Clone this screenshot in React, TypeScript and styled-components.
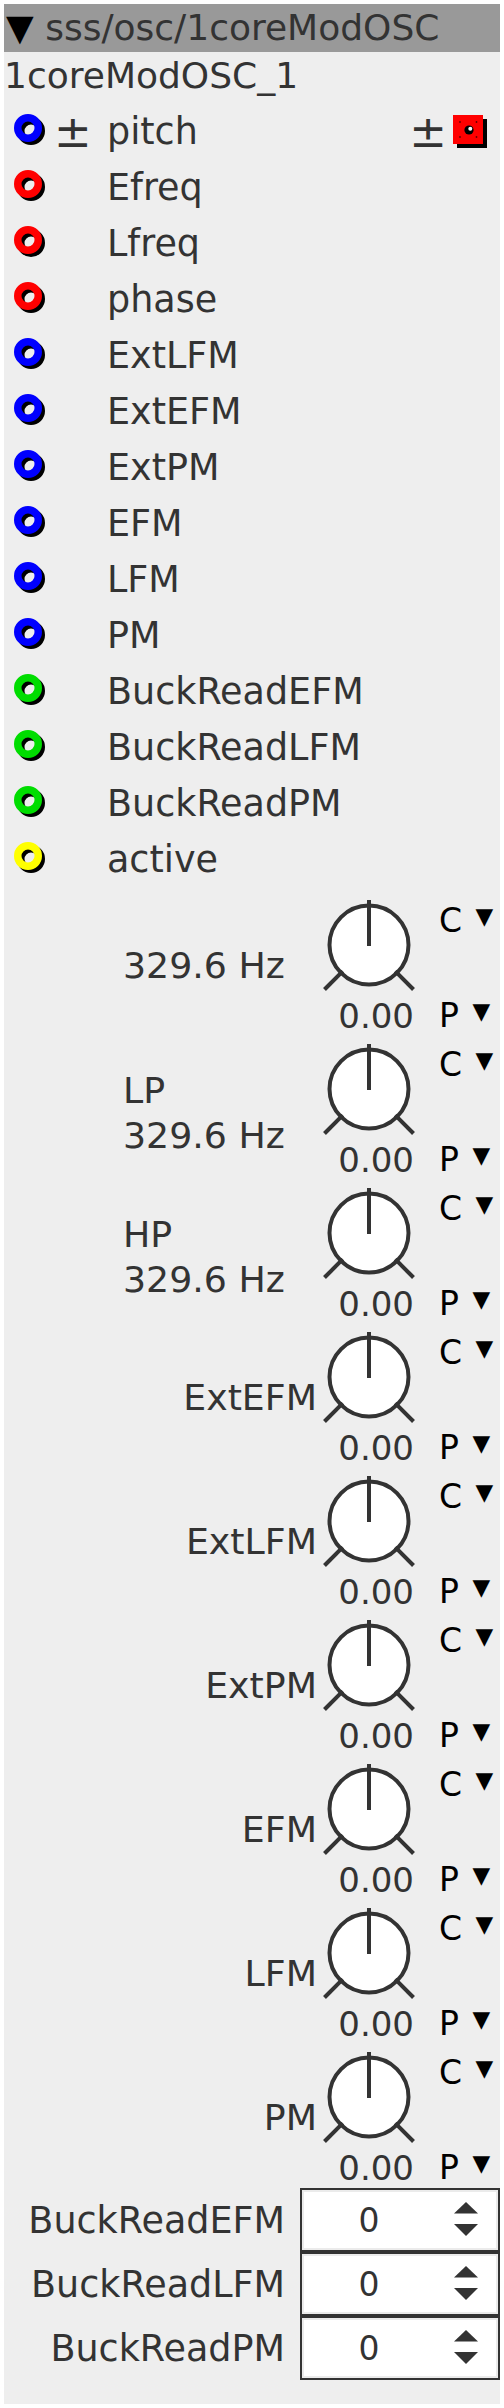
import styled, { createGlobalStyle } from 'styled-components';

const GlobalStyle = createGlobalStyle`
  html, body {
    margin: 0;
    padding: 0;
    background: #fff;
  }
  body {
    font-family: "DejaVu Sans", "Liberation Sans", sans-serif;
    color: #333;
  }
`;

const Panel = styled.div`
  margin: 4px;
  width: 496px;
  height: 2400px;
  background: #eeeeee;
  display: flex;
  flex-direction: column;
`;

const Header = styled.div`
  height: 48px;
  background: #999999;
  display: flex;
  align-items: center;
  padding: 0 0 2px 2px;
  box-sizing: border-box;
  font-size: 36px;
  white-space: nowrap;
  .caret {
    color: #000;
  }
`;

const Title = styled.div`
  height: 52px;
  padding-top: 3px;
  box-sizing: border-box;
  font-size: 36px;
  white-space: nowrap;
`;

const PortList = styled.div`
  display: flex;
  flex-direction: column;
`;

const PortRow = styled.div`
  display: grid;
  grid-template-columns: 50px 53px 1fr auto;
  align-items: center;
  height: 56px;
  padding-right: 12px;
  font-size: 36.5px;
  line-height: 56px;
  white-space: nowrap;
  svg {
    display: block;
  }
`;

const PlusMinus = styled.span`
  font-size: 45px;
  line-height: 56px;
`;

const RingCell = styled.div`
  padding-left: 10px;
  margin-top: -2px;
`;

const RightGroup = styled.div`
  display: flex;
  align-items: center;
  gap: 6px;
`;

const KnobSection = styled.div`
  margin-top: 5px;
  display: flex;
  flex-direction: column;
`;

const KnobRow = styled.div`
  display: grid;
  grid-template-columns: 314px 100px 1fr;
  height: 144px;
`;

const KnobLabel = styled.div<{ $left?: boolean; $twoLine?: boolean }>`
  align-self: center;
  font-size: 36.3px;
  line-height: 45px;
  white-space: nowrap;
  text-align: ${(p) => (p.$left ? 'left' : 'right')};
  padding: ${(p) => (p.$left ? '0 0 0 119px' : '0 1px 0 0')};
  margin-top: ${(p) => (p.$twoLine ? '8px' : '0')};
`;

const KnobCol = styled.div`
  display: flex;
  flex-direction: column;
  svg {
    display: block;
    margin: 5px 0 0 4px;
  }
`;

const Value = styled.div`
  margin-top: 4px;
  font-size: 34px;
  text-align: right;
  padding-right: 4px;
  white-space: nowrap;
`;

const ModCol = styled.div`
  display: flex;
  flex-direction: column;
  justify-content: space-between;
  padding: 8px 0 2px 21px;
  font-size: 33px;
  color: #000;
  white-space: nowrap;
`;

const Drop = styled.span`
  font-size: 23px;
  vertical-align: 8px;
  margin-left: 3px;
`;

const SpinSection = styled.div`
  margin-top: -1px;
  display: flex;
  flex-direction: column;
`;

const SpinRow = styled.div`
  display: grid;
  grid-template-columns: 281px 200px;
  column-gap: 15px;
  align-items: center;
  height: 64px;
`;

const SpinLabel = styled.div`
  text-align: right;
  font-size: 36.5px;
  white-space: nowrap;
`;

const SpinBox = styled.div`
  height: 64px;
  box-sizing: border-box;
  border: 2.5px solid #333;
  background: #fff;
  box-shadow: inset 0 0 0 2px #ebebeb;
  display: grid;
  grid-template-columns: 1fr 64px;
  align-items: center;
  svg {
    display: block;
    margin: 0 auto;
  }
`;

const SpinValue = styled.div`
  text-align: center;
  font-size: 33px;
  padding-left: 2px;
`;

const Port = ({ color }: { color: string }) => (
  <svg width="34" height="34" viewBox="0 0 34 34">
    <circle cx="17" cy="17" r="10.25" fill="none" stroke="#000" strokeWidth="7.5" />
    <circle cx="14" cy="14" r="10.25" fill="none" stroke={color} strokeWidth="7.5" />
  </svg>
);

const OutPort = () => (
  <svg width="35" height="36" viewBox="0 0 35 36">
    <rect x="4" y="5" width="30" height="29" fill="#000" />
    <rect x="0" y="1" width="30" height="29" fill="#ff0000" />
    <circle cx="7" cy="8" r="0.9" fill="#600" />
    <circle cx="23.5" cy="8" r="0.9" fill="#600" />
    <circle cx="7" cy="23" r="0.9" fill="#600" />
    <circle cx="23.5" cy="23" r="0.9" fill="#600" />
    <circle cx="16" cy="16" r="4.6" fill="#000" />
    <circle cx="17.3" cy="14.8" r="2" fill="#fff" />
  </svg>
);

const Knob = () => (
  <svg width="94" height="94" viewBox="0 0 94 94">
    <circle cx="47" cy="47" r="39.5" fill="#fff" stroke="#333" strokeWidth="4" />
    <line x1="47" y1="2" x2="47" y2="48" stroke="#333" strokeWidth="4" />
    <line x1="20.8" y1="73.2" x2="2.5" y2="91.5" stroke="#333" strokeWidth="4" />
    <line x1="73.2" y1="73.2" x2="91.5" y2="91.5" stroke="#333" strokeWidth="4" />
  </svg>
);

const SpinArrows = () => (
  <svg width="24" height="36" viewBox="0 0 24 36">
    <polygon points="12,0 24,11.5 0,11.5" fill="#333" />
    <polygon points="0,22 24,22 12,34" fill="#333" />
  </svg>
);

const ports: { name: string; color: string }[] = [
  { name: 'Efreq', color: '#ff0000' },
  { name: 'Lfreq', color: '#ff0000' },
  { name: 'phase', color: '#ff0000' },
  { name: 'ExtLFM', color: '#0000ff' },
  { name: 'ExtEFM', color: '#0000ff' },
  { name: 'ExtPM', color: '#0000ff' },
  { name: 'EFM', color: '#0000ff' },
  { name: 'LFM', color: '#0000ff' },
  { name: 'PM', color: '#0000ff' },
  { name: 'BuckReadEFM', color: '#00dd00' },
  { name: 'BuckReadLFM', color: '#00dd00' },
  { name: 'BuckReadPM', color: '#00dd00' },
  { name: 'active', color: '#ffff00' },
];

const knobs: { name?: string; freq?: boolean }[] = [
  { freq: true },
  { name: 'LP', freq: true },
  { name: 'HP', freq: true },
  { name: 'ExtEFM' },
  { name: 'ExtLFM' },
  { name: 'ExtPM' },
  { name: 'EFM' },
  { name: 'LFM' },
  { name: 'PM' },
];

const spins = ['BuckReadEFM', 'BuckReadLFM', 'BuckReadPM'];

export default function App() {
  return (
    <>
      <GlobalStyle />
      <Panel>
        <Header>
          <span className="caret">▼</span>&nbsp;sss/osc/1coreModOSC
        </Header>
        <Title>1coreModOSC_1</Title>
        <PortList>
          <PortRow>
            <RingCell>
              <Port color="#0000ff" />
            </RingCell>
            <PlusMinus>±</PlusMinus>
            <span>pitch</span>
            <RightGroup>
              <PlusMinus>±</PlusMinus>
              <OutPort />
            </RightGroup>
          </PortRow>
          {ports.map((p) => (
            <PortRow key={p.name}>
              <RingCell>
                <Port color={p.color} />
              </RingCell>
              <span />
              <span>{p.name}</span>
              <span />
            </PortRow>
          ))}
        </PortList>
        <KnobSection>
          {knobs.map((k, i) => (
            <KnobRow key={i}>
              {k.freq ? (
                <KnobLabel $left $twoLine={!!k.name}>
                  {k.name && <div>{k.name}</div>}
                  <div>329.6 Hz</div>
                </KnobLabel>
              ) : (
                <KnobLabel>{k.name}</KnobLabel>
              )}
              <KnobCol>
                <Knob />
                <Value>0.00</Value>
              </KnobCol>
              <ModCol>
                <div>
                  C <Drop>▼</Drop>
                </div>
                <div>
                  P <Drop>▼</Drop>
                </div>
              </ModCol>
            </KnobRow>
          ))}
        </KnobSection>
        <SpinSection>
          {spins.map((s) => (
            <SpinRow key={s}>
              <SpinLabel>{s}</SpinLabel>
              <SpinBox>
                <SpinValue>0</SpinValue>
                <SpinArrows />
              </SpinBox>
            </SpinRow>
          ))}
        </SpinSection>
      </Panel>
    </>
  );
}
